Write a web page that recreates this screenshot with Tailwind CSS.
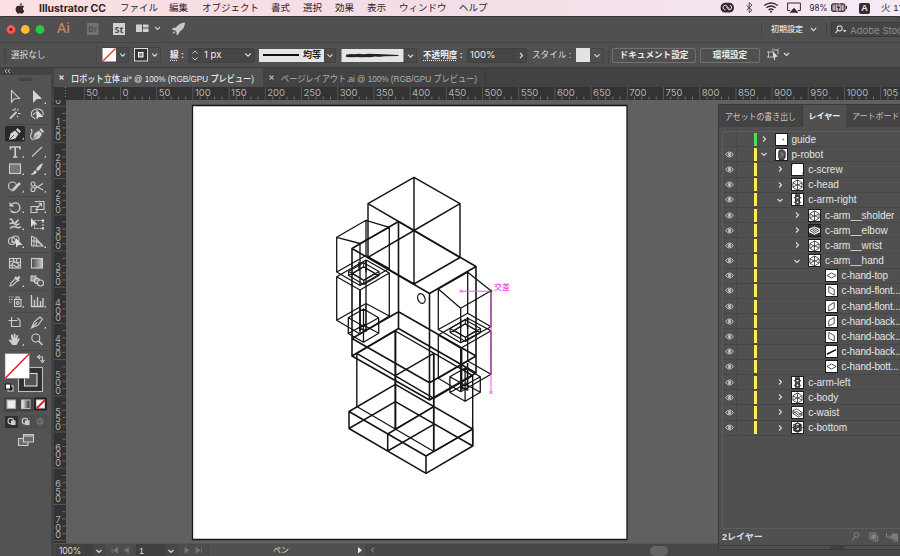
<!DOCTYPE html>
<html lang="ja">
<head>
<meta charset="utf-8">
<title>Illustrator CC</title>
<script src="https://cdn.jsdelivr.net/npm/@tailwindcss/browser@4"></script>
</head>
<body class="w-[900px] h-[556px] overflow-hidden bg-[#424242] font-['Liberation_Sans','Noto_Sans_CJK_JP',sans-serif] text-[10px] leading-none text-[#dcdcdc] flex flex-col whitespace-nowrap">

<!-- macOS menu bar -->
<header class="h-[16px] shrink-0 flex items-center text-[#302326] text-[9.5px] bg-linear-to-r from-[#fae0e2] via-[#f3dde6] to-[#f4eaf5]">
  <svg class="ml-[15px] w-[10px] h-[11px] shrink-0" viewBox="0 0 10 11" fill="#3b2626"><path d="M5 3C6 2.700 7.800 1.800 9 3.700 7.300 5 7.600 6.800 9.300 7.800 8.500 10 7.400 11 6.200 10.600 5.300 10.200 4.800 10.200 4 10.600 2.500 11 .5 8.400.6 5.900.8 3.200 2.800 2.300 5 3ZM4.800 2.500C4.800 1.300 5.600.300 6.800.100 6.900 1.300 6 2.500 4.800 2.500Z"/></svg>
  <svg class="ml-[14px] w-[81px] h-[14px] shrink-0" viewBox="0 0 81 14"><text x="0" y="10.600" font-family="Inter" font-weight="700" font-size="9.800" fill="#302326" textLength="67" lengthAdjust="spacingAndGlyphs">Illustrator CC</text></svg>
  <span class="w-[49px] shrink-0">ファイル</span>
  <span class="w-[33px] shrink-0">編集</span>
  <span class="w-[69px] shrink-0">オブジェクト</span>
  <span class="w-[32px] shrink-0">書式</span>
  <span class="w-[32px] shrink-0">選択</span>
  <span class="w-[32px] shrink-0">効果</span>
  <span class="w-[32px] shrink-0">表示</span>
  <span class="w-[60px] shrink-0">ウィンドウ</span>
  <span class="w-[261px] shrink-0">ヘルプ</span>
  <svg class="w-[140px] h-[16px] shrink-0" viewBox="720 0 140 16" fill="none" stroke="#332a2d">
    <rect x="720.500" y="2.800" width="13.500" height="9.800" rx="4.900" fill="#332a2d" stroke="none"/><path d="M725.500 9.800a2.300 2.300 0 1 1 .8-4.400l3 3.500M729.800 5.200a2.300 2.300 0 1 1-1 4.500l-2.500-3" stroke="#f7e5ea"/>
    <path d="M746.500 5.300l5.500 5-2.800 2.400v-10l2.800 2.400-5.500 5" stroke-width=".8"/>
    <path d="M764.200 5.600q6.800-5.200 13.600 0M766.400 7.800q4.600-3.600 9.200 0M768.600 10q2.400-2 4.800 0" stroke-width="1.300"/><circle cx="771" cy="11.700" r="1" fill="#332a2d" stroke="none"/>
    <path d="M790 10.500h-2.400v-7.500h12.800v7.500h-2.400"/><path d="M794 7.800l4.500 5h-9z" fill="#332a2d" stroke="none"/>
    <rect x="831.500" y="3.800" width="13.500" height="7.600" rx="1.600" fill="#85757a"/><path d="M846.500 6v3"/><path d="M834 5.500v4.500M836.800 4.800v6M840 4.800v6M842.800 5.500v4.500" stroke="#e9dee4"/><path d="M839.500 3l-3.500 5h2l-1 4 4-5.500h-2.300z" fill="#332a2d" stroke="#f5e7ed" stroke-width=".4"/>
    <text x="809.500" y="11.300" font-size="9" fill="#302326" stroke="none" font-family="Inter" textLength="18" lengthAdjust="spacingAndGlyphs">98%</text>
  </svg>
  <b class="w-[11px] h-[11px] shrink-0 -ml-[1px] mt-[1px] bg-[#33292e] rounded-[2px] text-[#f5e7f0] text-[9px] text-center leading-[11px]">A</b>
  <span class="ml-[11px]">火 17</span>
</header>

<!-- Title bar -->
<div class="h-[26px] shrink-0 bg-[#505050] border-t border-[#3b3033] rounded-t-[4px] flex items-center">
  <svg class="w-[190px] h-[25px] shrink-0" viewBox="0 17 190 25">
    <circle cx="11" cy="29.500" r="4.400" fill="#fb564f"/><circle cx="11" cy="29.500" r="1.300" fill="#620c09"/><circle cx="25.300" cy="29.500" r="4.400" fill="#fdbd2f"/><circle cx="40" cy="29.500" r="4.400" fill="#2bca42"/>
    <text x="57" y="33.300" font-family="Noto Sans" font-weight="500" font-size="15" textLength="13" lengthAdjust="spacingAndGlyphs" fill="#c98759">Ai</text>
    <rect x="87" y="23" width="11.500" height="12" fill="#727272"/><text x="88" y="32.300" font-family="Noto Sans" font-weight="600" font-size="8.500" textLength="9.500" lengthAdjust="spacingAndGlyphs" fill="#505050">Br</text>
    <rect x="113" y="23" width="12" height="12" fill="#d2d2d2"/><text x="114.500" y="32.500" font-family="Noto Sans" font-weight="700" font-size="9" textLength="9" lengthAdjust="spacingAndGlyphs" fill="#4a4a4a">St</text>
    <path d="M136 24.500h6v7.500h-6zM143 24.500h5.500v3h-5.500zM143 28.500h5.500v3.500h-5.500z" fill="#cfcfcf"/>
    <path d="M155 27l2.500 2.500 2.500-2.500" fill="none" stroke="#d0d0d0" stroke-width="1.100"/>
    <path d="M185 22.500q-6 .5-9 5l-3 .5-1 2 3 .3 1.500 2 0 3 2-1 1.500-3q5-3 5-8.800zM174 31l-1.500 3 2.800-1.500z" fill="#c8c8c8"/>
  </svg>
  <div class="ml-[571px] w-px h-[14px] bg-[#444]"></div>
  <span class="ml-[9px] w-[32px] text-[8px] font-medium text-[#e3e3e3]">初期設定</span>
  <svg class="ml-[7px] w-[7px] h-[5px]" viewBox="0 0 7 5"><path d="M.8.900l2.700 2.700L6.200.900" fill="none" stroke="#ddd" stroke-width="1.200"/></svg>
  <div class="ml-[9px] w-px h-[14px] bg-[#444]"></div>
  <div class="ml-[4px] flex-1 h-[15px] bg-[#454545] border border-r-0 border-[#3a3a3a] rounded-l-[2px] flex items-center overflow-hidden text-[#8c8c8c]">
    <svg class="ml-[3px] mr-[3px] w-[12px] h-[9px] shrink-0" viewBox="0 0 12 9" fill="none" stroke="#ccc" stroke-width="1.200"><circle cx="4.700" cy="3.300" r="2.500"/><path d="M3 5L.5 8"/><path d="M7.700 5h4L9.700 7.400z" fill="#ccc" stroke="none"/></svg><span class="font-['Inter'] text-[9.600px] leading-[13px] pt-[2px]">Adobe Stoc</span>
  </div>
</div>

<!-- Control bar -->
<div class="h-[25px] shrink-0 bg-[#505050] border-t border-[#434343] flex items-center text-[8.600px]">
  <div class="ml-[4px] w-[2px] h-[14px] bg-[#464646]"></div>
  <span class="ml-[5px] w-[85px] shrink-0">選択なし</span>
  <div class="w-px h-[18px] bg-[#464646]"></div>
  <svg class="ml-[5px] w-[60px] h-[16px] shrink-0" viewBox="102 46 60 16">
    <rect x="102" y="46.500" width="26.500" height="14.500" rx="1" fill="#4a4a4a" stroke="#434343"/><rect x="102.500" y="47" width="13.500" height="13.500" fill="#fff"/><path d="M103 60L115.500 47.500" stroke="#ee2920" stroke-width="1.300"/>
    <path d="M120.200 52.700l2.500 2.500 2.500-2.500M152.200 52.700l2.500 2.500 2.500-2.500" fill="none" stroke="#ddd" stroke-width="1.100"/>
    <rect x="134" y="46.500" width="26.500" height="14.500" rx="1" fill="none" stroke="#434343"/><rect x="134.500" y="47.500" width="13" height="12.500" fill="#343434" stroke="#ddd"/><rect x="138.500" y="51.500" width="4.500" height="4.500" fill="#888" stroke="#fff"/>
  </svg>
  <span class="ml-[8px] w-[18px] shrink-0 font-bold text-[#ededed]"><u class="decoration-dotted underline-offset-2">線</u> :</span>
  <div class="w-[67px] h-[15px] shrink-0 flex items-center bg-[#464646] border border-[#404040] rounded-[2px] text-[10px] text-[#eee]">
    <svg class="w-[12px] h-[13px]" viewBox="0 0 12 13" fill="none" stroke="#ccc"><path d="M3.500 4.500L6 2l2.500 2.500M3.500 8.500L6 11l2.500-2.500"/></svg>
    <span class="ml-[3px] w-[28px] font-['Inter'] text-[9.600px]">1 px</span>
    <svg class="ml-[12px] w-[8px] h-[6px]" viewBox="0 0 8 6"><path d="M1.300 1.500L4 4.200l2.700-2.700" fill="none" stroke="#ddd" stroke-width="1.100"/></svg>
  </div>
  <div class="ml-[4px] w-[65px] h-[13px] shrink-0 bg-[#e4e4e4] flex items-center text-[#222] font-bold">
    <div class="ml-[4px] w-[36px] h-[2px] shrink-0 bg-[#111]"></div><span class="ml-[4px] text-[9px]">均等</span>
  </div>
  <svg class="w-[12px] h-[15px] shrink-0" viewBox="0 0 12 15"><rect x="-1" y=".5" width="12.500" height="14" fill="#4a4a4a" stroke="#424242"/><path d="M3.500 6.300L6 8.800l2.500-2.500" fill="none" stroke="#ddd" stroke-width="1.100"/></svg>
  <svg class="ml-[5px] w-[76px] h-[15px] shrink-0" viewBox="342 46 76 15"><rect x="342.500" y="47" width="62.500" height="13" fill="#e4e4e4"/><path d="M347 52.800q4-1 8-.6 5-.8 9 0 6-.8 10-.2 7-.3 9 .2l17 .9-1 .8q-9 0-14 .3-5 .8-9 .4-5 1-9 .3-5 .8-8 0l-7 .4-5-.4z" fill="#222"/><rect x="405" y="46.500" width="12.500" height="14" fill="#4a4a4a" stroke="#424242"/><path d="M409 52.700l2.500 2.500 2.500-2.500" fill="none" stroke="#ddd" stroke-width="1.100"/></svg>
  <span class="ml-[6px] w-[44px] shrink-0 font-bold text-[#ededed]"><u class="decoration-dotted underline-offset-2">不透明度</u> :</span>
  <div class="w-[60px] h-[15px] shrink-0 flex items-center bg-[#464646] border border-[#404040] text-[#eee] rounded-[2px]"><span class="ml-[2px] w-[44px] border-r border-[#3d3d3d] font-['Inter'] text-[9.600px]">100%</span><svg class="ml-[5px] w-[5px] h-[7px]" viewBox="0 0 5 7"><path d="M1 1l2.500 2.500L1 6" fill="none" stroke="#ddd" stroke-width="1.100"/></svg></div>
  <span class="ml-[5px] w-[44px] shrink-0">スタイル :</span>
  <div class="w-[14px] h-[14px] shrink-0 bg-[#e2e2e2]"></div>
  <svg class="w-[14px] h-[15px] shrink-0" viewBox="0 0 14 15"><rect x="-1" y=".5" width="14" height="14" fill="none" stroke="#424242"/><path d="M4.500 6.300L7 8.800l2.500-2.500" fill="none" stroke="#ddd" stroke-width="1.100"/></svg>
  <div class="ml-[4px] w-px h-[18px] bg-[#444]"></div>
  <div class="ml-[3px] w-[84px] h-[15px] shrink-0 border border-[#717171] rounded-[2px] flex items-center justify-center font-bold text-[#eee]">ドキュメント設定</div>
  <div class="ml-[4px] w-[60px] h-[15px] shrink-0 border border-[#717171] rounded-[2px] flex items-center justify-center font-bold text-[#eee]">環境設定</div>
  <svg class="ml-[6px] w-[24px] h-[14px] shrink-0" viewBox="766 47 24 14" fill="none" stroke="#bbb"><path d="M768.500 51h5v5h-5zM767 51h2M767 56h2M774 49h4v4M773 47.500v2.500M779 47.500l-2 2"/><path d="M772.500 50l5.500 5.500-2.500.2-1.200 4.300z" fill="#ddd" stroke="none"/><path d="M784 52l2.500 2.500 2.500-2.500" stroke="#ddd" stroke-width="1.200"/></svg>
</div>

<div class="flex-1 min-h-0 flex border-t border-[#3f3f3f]">
  <!-- Tool panel -->
  <aside class="w-[52px] shrink-0 flex flex-col bg-[#535353] border-r border-[#454545]">
    <div class="h-[7px] bg-[#434343] pl-[4px]"><svg class="w-[7px] h-[6px]" viewBox="0 0 7 6" fill="none" stroke="#ccc"><path d="M3 1L1 3l2 2M6 1L4 3l2 2" stroke-width=".8"/></svg></div>
    <div class="h-[11px] flex justify-center pt-[3px]"><div class="w-[14px] h-[3px] bg-[repeating-linear-gradient(90deg,#3c3c3c_0_1px,#4b4b4b_1px_2px)]"></div></div>
    <svg class="w-[51px] h-[364px] shrink-0" viewBox="0 86 51 364" fill="none" stroke="#cdcdcd" stroke-width="1.100">
      <path d="M5 124.500h43M5 196.500h43M5 252.500h43M5 290.500h43M5 312.500h43M5 350.500h43" stroke="#494949"/>
      <rect x="5" y="126" width="20" height="15.500" rx="1.500" fill="#292929" stroke="none"/>
      <path d="M11.500 90.500v11.500l2.800-3.200 5.200-.3z"/><path d="M33 90v13l3.500-3.800 5.500-.4z" fill="#d5d5d5" stroke="none"/>
      <path d="M10 118.500l6.500-6.500" stroke-width="1.800"/><path d="M15 108v2.500M18.500 109l-1.300 1.500M18 113.500h2.500M12.500 109.500l1 1M18 117l-1-1"/>
      <path d="M33.500 117.500q-3-1-2-5 2-4 7-3.500 5.500 1 4.500 6"/><path d="M33 115q1.500-3 5-2.500M33.500 117l1.500 2"/><path d="M36.500 109.500v10l2.500-2.500h4.500z" fill="#ddd" stroke="none"/>
      <path d="M9 140l1.500-6.500 4.500-3 3.500 3.500-3 4.500zM16 129.700l1.500-1.700 3.500 3.500-1.600 1.700z" fill="#d5d5d5" stroke="none"/><path d="M9.500 139.500l4.500-4.500" stroke="#333" stroke-width=".8"/>
      <path d="M33 140l1.500-6.500 4.500-3 3 3.500-3 4.500zM39.500 129.700l1.500-1.700 3 3.500-1.500 1.500z" fill="#ccc" stroke="none"/><path d="M33.500 139.500l4-4.500" stroke="#535353" stroke-width=".8"/><path d="M31 129q2 2 .2 5t1.500 6"/>
      <path d="M10.500 149.500v-2.500h9.500v2.500M15.200 147v10M13 157h4.500" stroke-width="1.700"/><path d="M32 156.500l10-9.500"/>
      <rect x="9.500" y="164" width="11" height="9.500" fill="#777"/>
      <path d="M43 163q-5 2-7 6.500l1.800 1.500q4-3 5.200-8zM35 170l2 2q-2 3.500-6.500 2.500 3-1.500 4.500-4.500z" fill="#d5d5d5" stroke="none"/>
      <circle cx="12.500" cy="186" r="4"/><path d="M13 190l7-7" stroke-width="2.500"/><path d="M11.500 191l2-.5"/>
      <circle cx="33" cy="184" r="2"/><circle cx="33" cy="189.500" r="2"/><path d="M35 185.500l8 4.500M35 188.500l8-5" stroke-width="1.300"/>
      <path d="M12 204q5-3 7.500 1.500 1.500 4.500-2.500 6.500-4 1.500-6.500-1.500" stroke-width="1.300"/><path d="M9.500 202v4.500h5z" fill="#ccc" stroke="none"/><path d="M10 208.500v2" stroke-dasharray="1 1"/>
      <path d="M31 206.500h6v6h-6zM35 201.500h9v8h-9M37 208l4.500-4.500M38.500 203.500h3v3"/>
      <path d="M9.500 219q3 0 3.500 3t4-1M9.500 224q3-2 5 0t5-.5M10 228.500q3-3 6-1.500t5-.5M18.500 219.500l-3 4" stroke-width="1.500"/>
      <path d="M34.500 220.500h8.500v8h-8.500z" stroke-dasharray="2 1"/><path d="M31 218v9l2.500-2.500h4z" fill="#ddd" stroke="none"/><path d="M42 219.500h2v2h-2zM42 227.500h2v2h-2z" fill="#ddd" stroke="none"/>
      <circle cx="12" cy="241" r="3.500"/><circle cx="15.500" cy="239.500" r="3.500"/><path d="M11 242h6"/><path d="M16 238v9.500l2.500-2.500h4z" fill="#ddd" stroke="none"/>
      <path d="M31.500 236v10M31.500 236l5 2.500v7.500h-5M34 237v9M31.500 241h5l6 4.500M36.500 239l6.500 7h-7"/>
      <rect x="9.500" y="258.500" width="11" height="9.500"/><path d="M10 262q3-2 5 0t5 0M10 266q3-2 5 0t5-1M13 258q2 4 0 5t0 5M17.500 258q-2 3 0 5t0 5"/>
      <rect x="31.500" y="258.500" width="11" height="9.500" fill="url(#g)"/>
      <path d="M10 286l1-3 5-5 2 2-5 5z"/><path d="M15 277l4 4M17.500 279l2-2.500" stroke-width="2.300"/>
      <rect x="31" y="276" width="5" height="5" fill="#999"/><circle cx="37" cy="281" r="2.600" fill="#888"/><circle cx="40.500" cy="283" r="3" fill="#535353"/>
      <rect x="14.500" y="299.500" width="6.500" height="7"/><path d="M16 299v-2h3v2"/><circle cx="17.700" cy="303" r="1.400"/><path d="M9 297h5M9 299.500h4M9 302h3" stroke-dasharray="1.300 1"/>
      <path d="M31.500 295v11.500h12M34.500 306v-6M37.500 306v-9M40.500 306v-5M43 306v-8" stroke-width="1.400"/>
      <path d="M8.500 320.500h9M11.500 317v9.500h8.500v-6l-2.500-2.500"/>
      <path d="M31.500 328l2.500-6 6-5 2.500 2-4.500 6zM32 327.500l5-5"/>
      <path d="M12.500 345l-4-5q1-1.500 3.200.8l-.9-6q1-.8 1.800 0l1 3.500.1-4.300q1-.8 1.800 0v4.300l1.300-3.300q1.400-.3 1.400.8l-1.100 4 1.700-1.500q1.400 0 .8 1.200l-3.100 5.500z" fill="#cfcfcf" stroke="none"/>
      <circle cx="35.800" cy="338" r="4"/><path d="M38.500 341l4 4" stroke-width="1.700"/>
      <path d="M44 104h2v-2zM22 139.500h2v-2zM22 157.500h2v-2zM44 157.500h2v-2zM22 175h2v-2zM44 175h2v-2zM22 192.500h2v-2zM44 192.500h2v-2zM22 213h2v-2zM44 213h2v-2zM22 230h2v-2zM22 248h2v-2zM44 248h2v-2zM22 287h2v-2zM22 307.500h2v-2zM44 307.500h2v-2zM44 328.500h2v-2zM22 345.500h2v-2z" fill="#ddd" stroke="none"/>
      <rect x="18.500" y="367.500" width="24" height="24" fill="#303030" stroke="#bbb"/><rect x="24.500" y="373.500" width="12.500" height="12.500" fill="#535353" stroke="#ddd"/>
      <rect x="5" y="353.500" width="24.500" height="25" fill="#fff" stroke="#777" stroke-width=".6"/><path d="M5.500 378L29 354" stroke="#ed1c24" stroke-width="1.500"/>
      <path d="M38.500 357h4v4M40 355l-2.500 2 2.500 2M40.500 360l2 2.500 2-2.500"/>
      <rect x="8" y="386" width="5" height="5" fill="#111"/><rect x="5.500" y="384" width="5" height="5" fill="#fff" stroke="#222"/>
      <path d="M5 398h13v13H5zM19.500 398h13v13h-13z" fill="#444" stroke="#3d3d3d"/><rect x="7" y="400" width="8.500" height="8.500" fill="#eee" stroke="#aaa"/><rect x="21.500" y="400" width="8.500" height="8.500" fill="url(#g2)" stroke="#bbb"/>
      <rect x="34" y="397.500" width="13" height="13" rx="1" fill="#222" stroke="none"/><rect x="36.500" y="400" width="8" height="8" fill="#fff"/><path d="M36.500 408.500l8.500-8.500" stroke="#ed1c24" stroke-width="2"/>
      <rect x="5" y="416" width="13" height="12" fill="#2f2f2f" stroke="none"/><path d="M19.500 416h12v12h-12zM34 416h12v12h-12z" stroke="#484848"/>
      <circle cx="10.800" cy="421" r="2.800"/><rect x="11.500" y="421" width="3.500" height="3.500" fill="#ccc"/><circle cx="25" cy="421" r="2.800"/><rect x="25.500" y="421" width="3.500" height="3.500" fill="#ccc"/><circle cx="40" cy="421.500" r="2.600" stroke="#777"/><path d="M39 421h2v1.500" stroke="#777"/>
      <path d="M18.500 438.500h9.500v7H18.500z" fill="#6b6b6b"/><path d="M23.500 434.500h10v7.500h-10z" fill="#6b6b6b"/><path d="M23.500 436h10"/>
      <defs><linearGradient id="g"><stop stop-color="#444"/><stop offset="1" stop-color="#ccc"/></linearGradient><linearGradient id="g2"><stop stop-color="#fff"/><stop offset="1" stop-color="#222"/></linearGradient></defs>
    </svg>
  </aside>

  <main class="flex-1 min-w-0 ml-[2px] flex flex-col">
    <!-- Document tabs -->
    <nav class="h-[19px] shrink-0 flex items-center">
      <div class="w-[209px] h-full bg-[#505050] flex items-center"><svg class="ml-[5px] mr-[7px] w-[5px] h-[5px]" viewBox="0 0 5 5"><path d="M.5.500l4 4m0-4l-4 4" stroke="#e6e6e6" stroke-width="1.100"/></svg><svg class="w-[186px] h-[16px]" viewBox="0 0 186 16"><text x="0" y="11.500" font-size="9" font-weight="500" fill="#ececec" textLength="183" lengthAdjust="spacingAndGlyphs">ロボット立体.ai* @ 100% (RGB/GPU プレビュー)</text></svg></div>
      <div class="w-[223px] h-full border-r border-[#383838] flex items-center"><svg class="ml-[6px] mr-[7px] w-[5px] h-[5px]" viewBox="0 0 5 5"><path d="M.5.500l4 4m0-4l-4 4" stroke="#b0b0b0" stroke-width="1.100"/></svg><svg class="w-[200px] h-[16px]" viewBox="0 0 200 16"><text x="0" y="11.500" font-size="9" fill="#b0b0b0" textLength="196" lengthAdjust="spacingAndGlyphs">ページレイアウト.ai @ 100% (RGB/GPU プレビュー)</text></svg></div>
    </nav>
    <!-- Horizontal ruler -->
    <svg id="hruler" class="w-[846px] h-[13px] shrink-0 bg-[#333]" viewBox="54 87 846 13"></svg>
    <div class="flex-1 min-h-0 flex">
      <svg id="vruler" class="w-[12px] h-full shrink-0 bg-[#333]" viewBox="54 100 12 443" preserveAspectRatio="xMinYMin"></svg>
      <!-- Canvas with artboard -->
      <section class="relative flex-1 bg-[#606060]">
        <svg class="block w-[834px] h-[443px]" viewBox="66 100 834 443" fill="none" stroke="#151515" stroke-width="1.300" stroke-linejoin="round">
          <rect x="192.500" y="105.500" width="434.500" height="434" fill="#fff" stroke="#161616"/>
          <!-- head -->
          <path d="M414 177.300L368 203.700L414 230.500L460 203.700ZM368 203.700V257.300L414 284L460 257.500V203.700M414 177.300V284M368 257.300L414 230.500L460 257.500" stroke-width="1.450"/>
          <!-- body and waist -->
          <path d="M398.500 221.500L352 248.500L429.500 293.500L476 266.500ZM352 248.500V356L429.500 400L476 373V266.500M398.500 221.500V328.500M429.500 293.500V400M398.500 311.700L352 338.500L429.500 382.700L476 356ZM398.500 328.500L352 356M398.500 328.500L476 373" stroke-width="1.600"/>
          <ellipse cx="421.400" cy="298.600" rx="3.500" ry="5" transform="rotate(-22 421.400 298.600)"/>
          <!-- legs -->
          <path d="M356.800 353.300V406.500M395.400 331V429M472.700 375.500V446M356.800 353.300L395.400 331L472.700 375.700L433.800 398.300L356.800 353.300M395.400 375.700L433.800 353.300" stroke-width="1.400"/>
          <path d="M433.800 353.300V451.500M395.400 331V429" stroke-width="1.800"/>
          <path d="M356.800 406.500L433.800 451.500L472.700 429M395.400 429L433.800 406.500"/>
          <!-- feet -->
          <path d="M349 411.500L395.400 384.300L472.700 429L426 456ZM349 428.500L395.400 401.700L472.700 446L426 473.300ZM349 411.500V428.500M426 456V473.300M472.700 429V446M387.700 434V451M387.700 434L433.800 406.700M387.700 451L433.800 424.300" stroke-width="1.550"/>
          <!-- left arm -->
          <path d="M336.700 237.300L366 220.300L389.300 227.300L360 243.500ZM336.700 237.300V272M389.300 227.300V268.500M366 220.300V256M360 243.500V285.500M336.700 272L366 255.500L389.300 268.500L360 285.500ZM336.700 276.700L366 260L389.300 273L360 290ZM336.700 276.700V320.300M366 260V304M389.300 273V316M360 290V334M336.700 320.300L366 303.500L389.300 316L360 334Z"/>
          <g id="joint">
            <path d="M348.500 271.500L363.500 262.800L379 271.500L363.800 280.500ZM348.500 275.500L363.500 266.800L379 275.500L363.800 284.500ZM348.500 271.500v4M363.800 280.500v4M379 271.500v4" stroke-width="1.100"/>
            <path d="M353 273.500L363.700 267L374.500 273.500L363.700 280ZM363.700 262V268" stroke-width="1"/>
            <path d="M359 262V271M366 260V272" stroke-width="1.400"/>
          </g>
          <g id="hand">
            <path d="M348.300 317.700L363.500 309L378.700 317.700L363.500 326.300ZM348.300 333.500L363.500 325L378.700 333.300L363.500 342.300ZM348.300 317.700V333.500M378.700 317.700V333.500M363.500 309V342.300"/>
            <path d="M360 290V331M366 304V328M359 328l7-4v7z" stroke-width="1.600"/>
          </g>
          <!-- right arm -->
          <path d="M438.300 289L467.700 272.300L491 290.700L460.700 308.300ZM438.300 289V329.500M467.700 272.300V313.300M491 290.700V326.700M460.700 308.300V342.700M438.300 329.500L467.700 313.300L491 326.700L460.700 342.700ZM438.300 335L467.700 318.300L491 330.700L460.700 348.300ZM438.300 335V378.300M467.700 318.300V361M491 330.700V374.300M460.700 348.300V391.700M438.300 378.300L467.700 361L491 374.300L460.700 391.700Z"/>
          <use href="#joint" transform="translate(101.600 57)"/>
          <use href="#hand" transform="translate(101.600 59)"/>
          <!-- smart guides -->
          <path d="M461 291.200H491V392.500M459.500 289.700l3 3m0-3l-3 3M489.500 391l3 3m0-3l-3 3" stroke="#f05be8" stroke-width="1"/>
          <rect x="489.700" y="289.800" width="2.500" height="2.500" fill="#444" stroke="none"/>
          <text x="494" y="290" font-size="8" font-weight="500" fill="#f04be5" stroke="none">交差</text>
        </svg>
        <!-- Floating layers panel -->
        <div class="absolute left-[652px] top-[4px] w-[182px] h-[446px] bg-[#505050] border border-r-0 border-[#3b3b3b] flex flex-col">
          <div class="h-[22px] shrink-0 bg-[#434343] flex items-stretch text-[#bbb] overflow-hidden">
            <div class="w-[84px] shrink-0 pl-[6px] border-r border-[#3a3a3a] flex items-center"><svg class="w-[74px] h-[14px]" viewBox="0 0 74 14"><text x="0" y="10.500" font-size="8.600" fill="#c4c4c4" textLength="71" lengthAdjust="spacingAndGlyphs">アセットの書き出し</text></svg></div>
            <div class="w-[43px] shrink-0 bg-[#505050] flex items-center justify-center font-bold text-[8px] text-[#eee]"><span class="pt-[2px]">レイヤー</span></div>
            <div class="pl-[6px] pt-[1px] flex items-center text-[8px] text-[#c4c4c4]">アートボード</div>
          </div>
          <div class="ml-[3px] mt-[4px] h-[398px] shrink-0 border border-r-0 border-[#5c5c5c] rounded-l-[2px]" id="layers"></div>
          <div class="h-[17px] shrink-0 flex items-center border-b border-[#3d3d3d]">
            <span class="ml-[3px] w-[130px] text-[9px] font-bold text-[#ddd]">2レイヤー</span>
            <svg class="w-[50px] h-[12px]" viewBox="0 0 50 12" fill="none" stroke="#858585"><circle cx="5.500" cy="4" r="2.500"/><path d="M3.800 6L1 9.500"/><path d="M19 2h6v6h-6zM22 5h5v5h-5"/><rect x="21" y="4" width="3" height="3" fill="#858585"/><path d="M36 2v4h5M39 4l2 2-2 2M41 3h6v7h-4"/><rect x="42" y="4" width="5" height="4" fill="#777"/></svg>
          </div>
          <div class="flex-1 flex pl-[111px]"><div class="w-[14px] h-[3px] bg-[#404040]"></div></div>
        </div>
      </section>
    </div>
    <!-- Status bar -->
    <footer class="h-[13px] shrink-0 bg-[#474747] border-t border-[#555] flex items-center text-[9px] text-[#ddd]">
      <div class="ml-[2px] w-[37px] h-full bg-[#404040] pl-[3px] pt-[3px] font-['Inter'] text-[8.600px] tracking-[-0.200px]">100%</div>
      <svg class="w-[43px] h-[12px] shrink-0" viewBox="93 544 43 12"><rect x="106" y="544" width="30" height="12" fill="#4d4d4d"/><path d="M96.500 550l2.500 2.500 2.500-2.500" fill="none" stroke="#ddd" stroke-width="1.200"/><path d="M112 547.500v5.500M117.500 547.500v5.500l-4-2.700zM128.500 547.500v5.500l-4-2.700z" fill="#757575" stroke="#757575" stroke-width=".8"/></svg>
      <div class="w-[29px] h-full bg-[#404040] pl-[3px] pt-[3px]">1</div>
      <svg class="w-[44px] h-[12px] shrink-0" viewBox="165 544 44 12"><rect x="178" y="544" width="30" height="12" fill="#4d4d4d"/><path d="M168.500 550l2.500 2.500 2.500-2.500" fill="none" stroke="#ddd" stroke-width="1.200"/><path d="M185 547.500v5.500l4-2.700zM196 547.500v5.500l4-2.700zM201.500 547.500v5.500" fill="#757575" stroke="#757575" stroke-width=".8"/></svg>
      <div class="w-[144px] h-full bg-[#505050] pt-[3px] text-center text-[8px]">ペン</div>
      <svg class="w-[24px] h-[12px]" viewBox="353 544 24 12"><path d="M353 544h12v12h-12z" fill="#505050"/><path d="M358 547v6.500l4-3.200z" fill="#e6e6e6"/><path d="M374 547.500l-2.500 2.500 2.500 2.500" fill="none" stroke="#999"/></svg>
      <div class="ml-[273px] mt-[1px] w-[18px] h-[10px] rounded-full bg-[#646464]"></div>
    </footer>
  </main>
</div>

<script>
// Rulers: 50 units span 36.2px.
const step = 36.2;
let h = '';
for (let i = -1; i <= 21; i++) {
  const x = 120.5 + i * step;
  const label = i === 21 ? '105' : Math.abs(i * 50);
  h += `<path d="M${x} 87v12.500" stroke="#585858"/><text x="${x + 2}" y="95.800" font-size="9.500" fill="#b2b2b2" font-family="Inter">${label}</text>`;
  for (let k = 1; k < 5; k++) h += `<path d="M${x + k * step / 5} 96.500v3" stroke="#717171"/>`;
}
document.getElementById('hruler').innerHTML = h + '<path d="M65.500 87v12" stroke="#888" stroke-dasharray="1 2"/>';
let v = '';
for (let i = 0; i <= 12; i++) {
  const y = 106.200 + i * step, t = i ? String(100 + i * 50) : '0';
  v += `<path d="M54 ${y}h11.500" stroke="#585858"/>`;
  [...t].forEach((c, k) => v += `<text x="58" y="${y - 2.200 - (t.length - 1 - k) * 7.600}" font-size="9" text-anchor="middle" fill="#b2b2b2" font-family="Inter">${c}</text>`);
  for (let k = 1; k < 5; k++) v += `<path d="M62.500 ${y + k * step / 5}h3" stroke="#717171"/>`;
}
document.getElementById('vruler').innerHTML = v;

// Layer tree: [name, level, arrow, thumbnail]
const cube = '<path d="M6 1L1 4v5l5 3 5-3V4zM1 4l5 3 5-3M6 1v11M1 9l5-3 5 3"/>';
const thumbs = {
  dot: '<circle cx="8" cy="6" r="1" fill="#777" stroke="none"/>',
  robot: '<path d="M4 1h4l2 2v6l-2 3H4L3 9V3z" fill="#555" stroke="#222"/><path d="M5 4l3 2M5 8l3-2" stroke="#aaa"/>',
  screw: '<path d="M0 1h1M11 10h1"/>',
  cube,
  arm: '<path d="M4 1h4v10H4zM3 4l3-2 3 2-3 2zM3 9l3-2 3 2-3 2z" stroke-width="1.400"/>',
  elbow: '<path d="M0 0h12v4L6 1.500 0 4zM0 12h12V8l-6 2.500L0 8z" fill="#333" stroke="none"/><path d="M1 6l5-3 5 3-5 3zM4 6l2-1 2 1-2 1z"/>',
  diamond: '<path d="M1 6l5-2.800L11 6 6 8.800z"/>',
  left: '<path d="M3 1.500l6 3.500v6L3 8z"/>',
  right: '<path d="M3 5l6-3.500V8l-6 3z"/>',
  line: '<path d="M1 9l10-5" stroke-width="1.600" stroke="#111"/>',
  waist: '<path d="M1 4l4-2 6 4-4 3zM1 4v3l6 4 4-2V6M1 7l4-2 6 4"/>',
  bottom: '<path d="M2 3l4-2 4 2v6l-4 2-4-2zM1 6l5-2 5 2-5 4zM4 2v8M8 2v8M2 9l8-6" stroke-width="1.400"/>'
};
const rows = [
  ['guide', 0, 'r', 'dot'], ['p-robot', 0, 'd', 'robot'], ['c-screw', 1, 'r', 'screw'], ['c-head', 1, 'r', 'cube'],
  ['c-arm-right', 1, 'd', 'arm'], ['c-arm__sholder', 2, 'r', 'cube'], ['c-arm__elbow', 2, 'r', 'elbow'],
  ['c-arm__wrist', 2, 'r', 'cube'], ['c-arm__hand', 2, 'd', 'cube'], ['c-hand-top', 3, '', 'diamond'],
  ['c-hand-flont...', 3, '', 'left'], ['c-hand-flont...', 3, '', 'right'], ['c-hand-back...', 3, '', 'right'],
  ['c-hand-back...', 3, '', 'left'], ['c-hand-back...', 3, '', 'line'], ['c-hand-bott...', 3, '', 'diamond'],
  ['c-arm-left', 1, 'r', 'arm'], ['c-body', 1, 'r', 'cube'], ['c-waist', 1, 'r', 'waist'], ['c-bottom', 1, 'r', 'bottom']
];
const eye = '<svg class="w-[9px] h-[7px]" viewBox="0 0 9 7" fill="none" stroke="#ccc"><path d="M.6 3.500q3.900-5 7.800 0-3.900 5-7.800 0z"/><circle cx="4.500" cy="3.500" r="1.200" fill="#ccc"/></svg>';
const arrows = { r: 'M3 1.500L5.500 4 3 6.500', d: 'M1.500 3L4 5.500 6.500 3', '': '' };
document.getElementById('layers').innerHTML = rows.map(([name, lv, a, th], i) => `
<div class="h-[15.200px] flex items-center border-b border-[#474747] overflow-hidden">
  <div class="w-[14px] h-full shrink-0 border-r border-[#484848] flex items-center justify-center">${i ? eye : ''}</div>
  <div class="ml-[17px] w-[3px] h-[13px] shrink-0 ${i ? 'bg-[#fcf04e]' : 'bg-[#4fe05a]'}"></div>
  <svg class="w-[8px] h-[8px] shrink-0" style="margin-left:${2.500 + lv * 16.700}px" viewBox="0 0 8 8" fill="none" stroke="#ddd" stroke-width="1.100"><path d="${arrows[a]}"/></svg>
  <svg class="ml-[7px] w-[13px] h-[13px] shrink-0 bg-white border border-[#1c1c1c]" viewBox="0 0 12 12" fill="none" stroke="#333" stroke-width=".9">${thumbs[th]}</svg>
  <span class="ml-[4px] text-[10px] leading-[13px] text-[#e4e4e4] ${lv === 3 ? 'tracking-[-0.150px]' : ''}">${name}</span>
</div>`).join('');
</script>
</body>
</html>
